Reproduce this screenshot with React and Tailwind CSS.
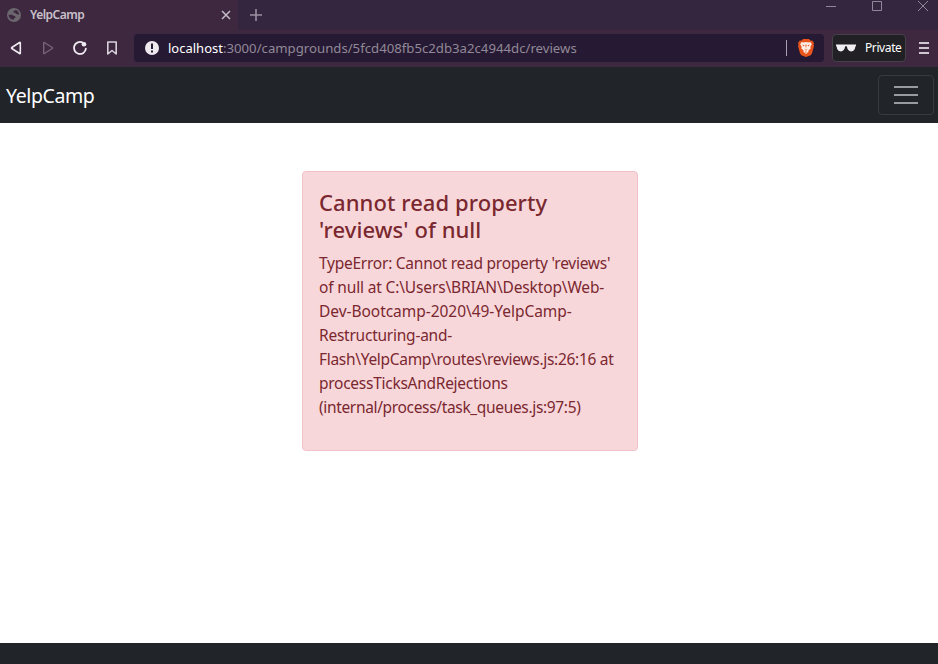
const traceLines = [
  { text: "TypeError: Cannot read property 'reviews'", tracking: "tracking-[-0.25px]" },
  { text: "of null at C:\\Users\\BRIAN\\Desktop\\Web-", tracking: "tracking-[-0.15px]" },
  { text: "Dev-Bootcamp-2020\\49-YelpCamp-", tracking: "tracking-[-0.04px]" },
  { text: "Restructuring-and-", tracking: "tracking-[-0.24px]" },
  { text: "Flash\\YelpCamp\\routes\\reviews.js:26:16 at", tracking: "tracking-[-0.3px]" },
  { text: "processTicksAndRejections", tracking: "tracking-[-0.27px]" },
  { text: "(internal/process/task_queues.js:97:5)", tracking: "tracking-[-0.34px]" },
];

function GlobeIcon() {
  return (
    <svg className="size-[14px] shrink-0" viewBox="0 0 14 14">
      <circle cx="7" cy="7" r="7" fill="#6c666e" />
      <path
        d="M1.500 6.800h3.200c1.200 0 1.300 1.200 2.400 1.200 1.300 0 1.600.6 1.200 1.500-.4.900-1.700.8-2 2.300-2.600-.2-4.500-2-4.800-5z"
        fill="#3d2840"
      />
      <path
        d="M8.600 1.800c-.2 1.200-2.300.7-2.300 1.900 0 1.400 1.400.6 2 1.400.7.900 1.400 1.500 3.900 1.300-.3-2.300-1.600-3.900-3.600-4.600z"
        fill="#3d2840"
      />
    </svg>
  );
}

function TabStrip() {
  return (
    <div className="flex h-[30px] bg-[#34263f]">
      <div className="flex w-[238px] items-center bg-[#3d2840] pl-[7px] pr-[7px]">
        <GlobeIcon />
        <span className="ml-[9px] text-[12px] font-semibold tracking-[-0.5px] text-[#c9c0cb]">YelpCamp</span>
        <svg className="ml-auto size-[10px]" viewBox="0 0 10 10" stroke="#c5bcc8" strokeWidth="1.5">
          <path d="M1 1l8 8M9 1l-8 8" />
        </svg>
      </div>
      <svg className="ml-3 mt-[9px] size-3" viewBox="0 0 12 12" stroke="#9b90a1" strokeWidth="1.6">
        <path d="M6 0v12M0 6h12" />
      </svg>
      <svg className="ml-auto mr-[9px] h-3 w-[104px]" viewBox="0 0 104 12" fill="none" stroke="#91879a" strokeWidth="1">
        <path d="M1 6.500h10M47.500 1.500h9v9h-9zM93 1l10 10M103 1l-10 10" />
      </svg>
    </div>
  );
}

function BraveIcon() {
  return (
    <svg className="ml-[11px] h-[18px] w-4" viewBox="0 0 16 18">
      <path d="M5 0h6l1.700 1.700 1.500-.2L16 4l-.5 1.600.5 1.500-2 7.200c-.3 1-1 1.700-1.800 2.200L8 18l-4.200-1.500C3 16 2.300 15.300 2 14.300L0 7.100l.5-1.500L0 4l1.800-2.500 1.500.2z" fill="#e8541b" />
      <path d="M3.700 3l1.800.4L8 2.900l2.500.5 1.800-.4 1.500 2.200-1.500 2.600.4 1.600-2.400 2.100.4 1.100L8 14.900l-2.700-2.300.4-1.100-2.400-2.100.4-1.600-1.500-2.600z" fill="#fff0e9" />
      <path d="M3.900 5.600l2.600.7-.6 1.200zM12.100 5.600l-2.600.7.6 1.200zM7.400 5.500h1.200l-.3 3h-.6zM6.100 9.400L8 10.700l1.900-1.300L8 11.800zM8 12.300l1 .6-1 .8-1-.8z" fill="#e8541b" />
    </svg>
  );
}

function Toolbar() {
  return (
    <div className="flex h-[37px] items-center bg-[#3d2840] pb-px">
      <svg className="h-5 w-[134px] shrink-0" viewBox="0 0 134 20" fill="none" strokeLinejoin="round">
        <path d="M20.300 4.800v10.400q0 .7-.7.300l-7.800-5q-.6-.5 0-1l7.800-5q.7-.4.700.3z" stroke="#f0eaf1" strokeWidth="1.600" />
        <path d="M43.700 4.800v10.400q0 .7.700.3l7.800-5q.6-.5 0-1l-7.800-5q-.7-.4-.7.300z" stroke="#77637b" strokeWidth="1.400" />
        <path d="M82.700 4.600A6 6 0 1 0 85.900 10.700" stroke="#f0eaf1" strokeWidth="1.800" strokeLinecap="round" />
        <circle cx="84" cy="6.200" r="2.300" fill="#f0eaf1" />
        <path d="M107.800 4h8.400v12l-4.200-3.500-4.200 3.500z" stroke="#d9d0db" strokeWidth="1.600" />
      </svg>
      <div className="flex h-7 w-[690px] items-center rounded bg-[#261933] pl-[11px] text-[13px]">
        <svg className="size-[14px] shrink-0" viewBox="0 0 14 14">
          <circle cx="7" cy="7" r="7" fill="#eeeaf0" />
          <path d="M7 2.600v5.400M7 9.500v2" stroke="#261933" strokeWidth="2" />
        </svg>
        <span className="ml-[9px] whitespace-nowrap pt-[2px] text-[#918997]">
          <span className="text-white">localhost</span>
          <span className="text-[13.2px]">:3000/campgrounds/5fcd408fb5c2db3a2c4944dc/reviews</span>
        </span>
        <div className="ml-auto h-4 w-px bg-[#a79fb0]" />
        <BraveIcon />
        <div className="w-[10px] shrink-0" />
      </div>
      <div className="ml-2 flex h-7 w-[74px] items-center rounded border border-[#454149] bg-[#212024] pl-[3px]">
        <svg className="h-2 w-5 shrink-0" viewBox="0 0 20 8" fill="#f0eef1">
          <path d="M0 .5h20v1.800h-.6C19 5.500 18 7.500 15.200 7.500c-2.600 0-3.800-2-4.200-4.700-.3-.6-1.700-.6-2 0C8.600 5.500 7.400 7.500 4.800 7.500 2 7.500 1 5.500.6 2.300H0z" />
        </svg>
        <span className="ml-[9px] text-[12px] tracking-[-0.4px] text-white">Private</span>
      </div>
      <div className="ml-[13px] flex flex-col gap-[3px]">
        <div className="h-[2px] w-[10px] bg-[#cfc6d2]" />
        <div className="h-[2px] w-[10px] bg-[#cfc6d2]" />
        <div className="h-[2px] w-[10px] bg-[#cfc6d2]" />
      </div>
    </div>
  );
}

function Navbar() {
  return (
    <nav className="flex h-14 items-center justify-between bg-[#212529] pl-[6px] pr-1">
      <span className="pt-[2px] text-[19.5px] tracking-[-0.4px] text-white">YelpCamp</span>
      <button className="flex h-10 w-14 flex-col items-center justify-center gap-[6px] rounded border border-[#373b40]">
        <span className="h-[2px] w-6 bg-[#999c9e]" />
        <span className="h-[2px] w-6 bg-[#999c9e]" />
        <span className="h-[2px] w-6 bg-[#999c9e]" />
      </button>
    </nav>
  );
}

export default function App() {
  return (
    <div className="flex h-screen w-full flex-col overflow-hidden bg-white font-['Noto_Sans','Open_Sans',sans-serif]">
      <TabStrip />
      <Toolbar />
      <Navbar />
      <main className="flex-1 pl-[302px] pt-12">
        <div className="h-[280px] w-[336px] rounded border border-[#f1c2c8] bg-[#f8d7da] px-4 pt-[17px] text-[#7a2830]">
          <h4 className="mb-2 text-[22px] font-medium leading-[27px] tracking-[0.07px]">
            Cannot read property 'reviews' of null
          </h4>
          <p className="whitespace-nowrap text-[15.5px] leading-6">
            {traceLines.map(({ text, tracking }) => (
              <span key={text} className={"block " + tracking}>{text}</span>
            ))}
          </p>
        </div>
      </main>
      <footer className="h-[21px] bg-[#212529]" />
    </div>
  );
}
